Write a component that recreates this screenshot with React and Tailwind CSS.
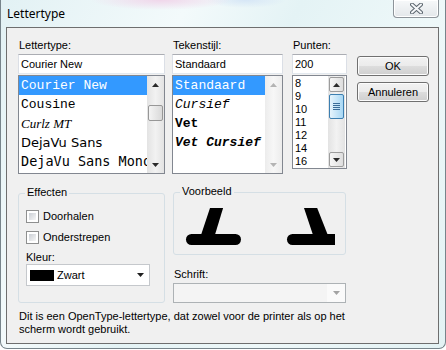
import React from 'react';

const fonts = [
  { name: 'Courier New', cls: "font-['Liberation_Mono',monospace] text-[13px]" },
  { name: 'Cousine', cls: "font-['Liberation_Mono',monospace] text-[13px]" },
  { name: 'Curlz MT', cls: "font-['Liberation_Serif',serif] italic text-[13px]" },
  { name: 'DejaVu Sans', cls: "font-['DejaVu_Sans',sans-serif] text-[13px]" },
  { name: 'DejaVu Sans Mono', cls: "font-['DejaVu_Sans_Mono',monospace] text-[13.5px]" },
];

const styles = [
  { name: 'Standaard', cls: '' },
  { name: 'Cursief', cls: 'italic' },
  { name: 'Vet', cls: 'font-bold' },
  { name: 'Vet Cursief', cls: 'font-bold italic' },
];

const sizes = ['8', '9', '10', '11', '12', '14', '16'];

const Arrow = ({ up, color = '#1f1f1f' }) => (
  <svg width="7" height="4" viewBox="0 0 7 4">
    <path d={up ? 'M0 4L3.5 0L7 4Z' : 'M0 0L3.5 4L7 0Z'} fill={color} />
  </svg>
);

// win7 style vertical scrollbar, three looks
const ScrollBar = ({ variant }) => {
  const track =
    variant === 'disabled'
      ? 'bg-gradient-to-r from-[#ececec] via-[#f7f7f7] to-[#ececec]'
      : 'bg-gradient-to-r from-[#e3e3e3] via-[#f2f2f2] to-[#e3e3e3]';
  const arrowColor = variant === 'disabled' ? '#b4b4b4' : '#2a2a2a';
  const btn =
    variant === 'hover'
      ? 'mx-[1px] my-[1px] h-[15px] rounded-[2px] border border-[#9c9c9c] bg-gradient-to-r from-[#f6f6f6] to-[#dedede]'
      : 'h-[17px]';

  return (
    <div className={`w-[17px] h-full flex flex-col ${track}`}>
      <div className={`flex items-center justify-center ${btn}`}>
        <Arrow up color={arrowColor} />
      </div>
      <div className="flex-1 flex flex-col">
        {variant === 'normal' && (
          <div className="mt-[12px] mx-[1px] h-[16px] rounded-[2px] border border-[#979797] bg-gradient-to-r from-[#f4f4f4] to-[#d9d9d9]" />
        )}
        {variant === 'hover' && (
          <div className="mt-[1px] mx-[1px] h-[25px] rounded-[2px] border border-[#3c7fb1] bg-gradient-to-r from-[#e6f4fc] to-[#a7d7f4] flex flex-col items-center justify-center gap-[1px]">
            <div className="w-[7px] h-[1px] bg-[#3b6d99]" />
            <div className="w-[7px] h-[1px] bg-[#3b6d99]" />
            <div className="w-[7px] h-[1px] bg-[#3b6d99]" />
            <div className="w-[7px] h-[1px] bg-[#3b6d99]" />
          </div>
        )}
      </div>
      <div className={`flex items-center justify-center ${btn}`}>
        <Arrow color={arrowColor} />
      </div>
    </div>
  );
};

const Label = ({ children, className = '' }) => (
  <div className={`h-[13px] leading-[13px] pl-[1px] ${className}`}>{children}</div>
);

const TextBox = ({ value }) => (
  <div className="mt-[2px] h-[20px] border border-[#abadb3] border-l-[#dbdfe6] border-r-[#dbdfe6] border-b-[#e3e9ef] bg-white flex items-center pl-[2px] whitespace-nowrap">
    {value}
  </div>
);

const GroupBox = ({ label, className = '', children }) => (
  <div className={`relative border border-[#d5dfe5] rounded-[3px] ${className}`}>
    <span className="absolute -top-[8px] left-[6px] px-[2px] bg-[#f0f0f0] leading-[13px]">{label}</span>
    {children}
  </div>
);

const Check = ({ label, className = '' }) => (
  <div className={`flex items-center h-[13px] ${className}`}>
    <div className="w-[13px] h-[13px] border border-[#8e8f8f] bg-white p-[2px]">
      <div className="w-full h-full bg-gradient-to-br from-[#cbcfd5] to-[#f6f6f6]" />
    </div>
    <span className="ml-[4px] leading-[13px]">{label}</span>
  </div>
);

const Button = ({ children, className = '' }) => (
  <div
    className={`h-[20px] rounded-[3px] border border-[#707070] shadow-[inset_0_0_0_1px_#fcfcfc] bg-[linear-gradient(#f2f2f2_0%,#ebebeb_50%,#dddddd_50%,#cfcfcf_100%)] flex items-center justify-center ${className}`}
  >
    {children}
  </div>
);

export default function App() {
  return (
    <div className="w-[446px] h-[350px] bg-white font-['Liberation_Sans',Arial,sans-serif] text-[11px] text-black">
      <div className="w-[446px] h-[349px] flex flex-col rounded-b-[7px] border-x border-b border-[#77848b] bg-[radial-gradient(ellipse_70px_10px_at_160px_0px,#f0d6ea,transparent),radial-gradient(ellipse_40px_8px_at_245px_0px,#d6e6f6,transparent),linear-gradient(118deg,#e2f1f4_0%,#f3fafb_30%,#e4f3f5_48%,#eef8f9_70%,#e3f2f4_100%)]">
        {/* title bar */}
        <div className="h-[27px] flex justify-between pl-[6px] pr-[6px]">
          <div className="self-center font-['Noto_Sans',sans-serif] text-[12px] leading-[16px] mt-[1px]">Lettertype</div>
          <div className="w-[46px] h-[18px] rounded-b-[4px] border border-t-0 border-[#8d949a] bg-gradient-to-b from-[#f7f9fa] to-[#e3e7ea] shadow-[inset_0_0_0_1px_#ffffff] flex items-center justify-center">
            <svg width="13" height="11" viewBox="0 0 13 11">
              <path d="M2 1.5L11 9.5M11 1.5L2 9.5" stroke="#5a646d" strokeWidth="4" strokeLinecap="round" />
              <path d="M2 1.5L11 9.5M11 1.5L2 9.5" stroke="#f4f6f8" strokeWidth="2" strokeLinecap="round" />
            </svg>
          </div>
        </div>

        {/* client */}
        <div className="ml-[5px] w-[433px] h-[317px] border border-[#6e6e6e] bg-[#f0f0f0] pl-[11px] pt-[11px]">
          <div className="flex items-start">
            <div className="w-[147px]">
              <Label>Lettertype:</Label>
              <TextBox value="Courier New" />
              <div className="mt-[1px] h-[99px] border border-[#828790] bg-white flex">
                <div className="flex-1 min-w-0 overflow-hidden">
                  {fonts.map((f, i) => (
                    <div
                      key={f.name}
                      className={`h-[19px] flex items-center pl-[2px] whitespace-nowrap ${f.cls} ${i === 0 ? 'bg-[#3399ff] text-white' : ''}`}
                    >
                      {f.name}
                    </div>
                  ))}
                </div>
                <ScrollBar variant="normal" />
              </div>
            </div>

            <div className="ml-[7px] w-[111px]">
              <Label>Tekenstijl:</Label>
              <TextBox value="Standaard" />
              <div className="mt-[1px] h-[99px] border border-[#828790] bg-white flex">
                <div className="flex-1 min-w-0 overflow-hidden font-['Liberation_Mono',monospace] text-[13px]">
                  {styles.map((s, i) => (
                    <div
                      key={s.name}
                      className={`h-[19px] flex items-center pl-[2px] whitespace-nowrap ${s.cls} ${i === 0 ? 'bg-[#3399ff] text-white' : ''}`}
                    >
                      {s.name}
                    </div>
                  ))}
                </div>
                <ScrollBar variant="disabled" />
              </div>
            </div>

            <div className="ml-[9px] w-[55px]">
              <Label>Punten:</Label>
              <TextBox value="200" />
              <div className="mt-[1px] h-[94px] border border-[#828790] bg-white flex pr-[1px]">
                <div className="flex-1 min-w-0 overflow-hidden">
                  {sizes.map((s) => (
                    <div key={s} className="h-[13px] leading-[13px] pt-[1px] pl-[2px]">
                      {s}
                    </div>
                  ))}
                </div>
                <ScrollBar variant="hover" />
              </div>
            </div>

            <div className="ml-[10px] w-[72px] mt-[17px] flex flex-col gap-[6px]">
              <Button>OK</Button>
              <Button>Annuleren</Button>
            </div>
          </div>

          <div className="flex items-start mt-[18px]">
            <GroupBox label="Effecten" className="w-[147px] h-[110px] mt-[1px]">
              <div className="pl-[7px] pt-[16px]">
                <Check label="Doorhalen" />
                <Check label="Onderstrepen" className="mt-[8px]" />
                <div className="mt-[7px] h-[13px] leading-[13px]">Kleur:</div>
                <div className="w-[124px] h-[22px] border border-[#c5c8cc] bg-white flex items-center pl-[3px]">
                  <div className="w-[24px] h-[11px] bg-black" />
                  <span className="ml-[3px]">Zwart</span>
                  <div className="ml-auto mr-[5px] flex">
                    <Arrow />
                  </div>
                </div>
              </div>
            </GroupBox>

            <div className="ml-[8px] w-[173px]">
              <GroupBox label="Voorbeeld" className="h-[63px]">
                {/* clipped sample of the 200pt preview */}
                <svg width="171" height="61" viewBox="0 0 171 61">
                  <defs>
                    <clipPath id="prev">
                      <rect x="0" y="15" width="161" height="44" />
                    </clipPath>
                  </defs>
                  <g clipPath="url(#prev)" fill="#000">
                    <polygon points="37,12 50,12 40,45 26,45" />
                    <rect x="12" y="41" width="55" height="11" rx="5.5" />
                    <polygon points="129,12 142,12 155,45 140,45" />
                    <rect x="113" y="41" width="70" height="11" rx="5.5" />
                  </g>
                </svg>
              </GroupBox>
              <Label className="mt-[13px] pl-0">Schrift:</Label>
              <div className="mt-[2px] h-[20px] border border-[#adb2b5] bg-[#f4f4f4] flex">
                <div className="flex-1" />
                <div className="w-[18px] bg-[#fafafa] flex items-center justify-center">
                  <Arrow color="#a3a3a3" />
                </div>
              </div>
            </div>
          </div>

          <p className="mt-[7px] pl-[1px] leading-[13px] whitespace-nowrap">
            Dit is een OpenType-lettertype, dat zowel voor de printer als op het
            <br />
            scherm wordt gebruikt.
          </p>
        </div>
      </div>
    </div>
  );
}
